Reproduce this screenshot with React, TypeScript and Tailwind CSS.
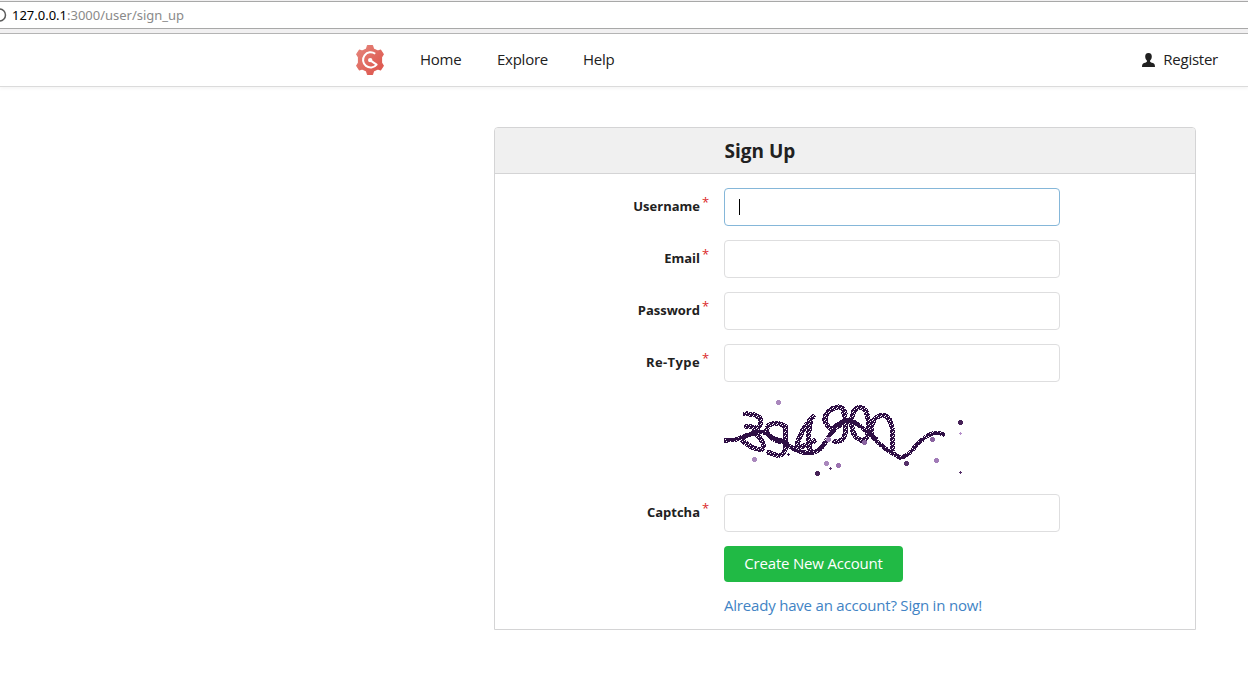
import React from "react";

const DARK = "#2f0f45";

const strokes = [
  "M745 414 Q755 413.500 760 418 Q762.500 426 757 428.500 Q750 426 746.500 426.500",
  "M754 432 Q759 436 762.500 441.500 Q765 448 760.500 450 Q751 448 743 441",
  "M786 428 Q784 424.500 778 423.500 Q769 423 767 428 Q766 434 772 438 Q779 443 785 441.500 M785.500 426 L786 446 Q784 457 776 455 L769 452.500",
  "M813 416.500 L804 428 Q797.500 441 796.500 447 Q806 447 814 441 M810.500 420.500 Q808.500 432 808 444 L811 452",
  "M845 413 Q842 404.500 834 408 Q824 412 825 421 Q829 430 833 429 Q844 424 845 419 M843.500 411 Q848 428 843.500 439 Q839 442 834.500 441.500",
  "M860 407.500 Q852 407 851.500 423 Q852 438 862 440.500 Q868.500 441 868.500 424 Q867.500 407 860 407.500",
  "M872 434 Q870 417 882 415.500 Q890 415 892 428 L893 449",
];

const heavy =
  "M741 438.500 Q750 433.500 758 432.500 M766 432 Q769 437 775 439 L786 442 L786.500 447 M833 428.500 Q840 421.500 848 420.500 L855 422.500 M868 432 L877 440";

const strike =
  "M724 440.5 L735 440 Q748 434 757 433 Q766 430 771 437 L787 444 Q797 453 809 453 Q820 453 826 441 Q834 427 845 421 L855 422.5 Q862 427 870 434.5 Q883 449 900 457.5 Q908 457 914 448 Q929 431 939 433 L945 435";

const dots: [number, number, number, string][] = [
  [778.5, 402.5, 2.5, "#aa88bd"],
  [754.5, 459.5, 2.5, "#aa88bd"],
  [826.5, 463.5, 2.5, "#aa88bd"],
  [838.5, 465.5, 2.5, "#9b72b0"],
  [817.5, 473.5, 2.5, "#462257"],
  [828.5, 439.5, 2.5, "#9c78b0"],
  [864.5, 442.5, 2.5, "#8a64a0"],
  [932.5, 439.5, 2.5, "#8a64a0"],
  [906.5, 463.5, 2.5, "#56316a"],
  [936.5, 460.5, 2.5, "#a27cb8"],
  [960.5, 422.5, 2.5, "#462257"],
  [788.5, 454.5, 1.2, DARK],
  [830.5, 468.5, 1.2, "#56316a"],
  [960.5, 433.5, 1.2, "#b58fca"],
  [960.5, 472.5, 1.2, "#56316a"],
];

function Captcha() {
  return (
    <svg width="240" height="80" viewBox="724 396 240 80" fill="none" shapeRendering="crispEdges">
      <defs>
        <pattern id="weave" width="4" height="4" patternUnits="userSpaceOnUse">
          <path fill={DARK} d="M0 0h4v4H0z" />
          <path fill="#fff" d="M0 0h1v1H0zM2 1h1v1H2zM1 3h1v1H1z" />
        </pattern>
      </defs>
      {strokes.map((d) => (
        <path key={d} d={d} stroke="url(#weave)" strokeWidth="5" strokeLinecap="round" strokeLinejoin="round" />
      ))}
      <path d={strike} stroke="url(#weave)" strokeWidth="4.4" />
      <path d={strike} stroke={DARK} strokeWidth="1.5" />
      <path d={heavy} stroke={DARK} strokeWidth="4.4" />
      {dots.map(([x, y, r, c]) => (
        <circle key={`${x}-${y}`} cx={x} cy={y} r={r} fill={c} />
      ))}
    </svg>
  );
}

function Logo() {
  return (
    <svg width="28" height="30" viewBox="0 0 28 30">
      <defs>
        <linearGradient id="gear" x1="0" y1="0" x2="1" y2="1">
          <stop offset="0" stopColor="#e5857b" />
          <stop offset="1" stopColor="#dc5148" />
        </linearGradient>
      </defs>
      <path
        fill="url(#gear)"
        stroke="url(#gear)"
        strokeWidth="1.2"
        strokeLinejoin="round"
        d="M11.5.7h5l1 3.300 4.300 2 2.900-.8 2.600 4.100-1.800 2.800v5.800l1.800 2.800-2.600 4.100-2.900-.8-4.300 2-1 3.300h-5l-1-3.300-4.300-2-2.900.8L.7 20.700l1.800-2.800v-5.800L.7 9.300l2.600-4.100 2.900.8 4.300-2z"
      />
      <path
        fill="none"
        stroke="#fff"
        strokeWidth="2"
        strokeLinejoin="round"
        d="M19.200 8.800A7.600 7.600 0 1 0 20.600 19.600L14.300 15.400"
      />
      <circle cx="14.200" cy="15.100" r="2.200" fill="#fff" />
    </svg>
  );
}

function Label({ text }: { text: string }) {
  return (
    <div className="flex h-[38px] w-[213px] items-start justify-end text-[13px] leading-[18px] font-bold text-[#212121]">
      <span className={text === "Re-Type" ? "pt-[9px] tracking-[0.4px]" : "pt-[9px]"}>{text}</span>
      <span className="w-[9px] pt-[5px] pl-0.5 text-[13px] font-normal text-[#db2828]">*</span>
    </div>
  );
}

function Field({ label, focused = false }: { label: string; focused?: boolean }) {
  return (
    <div className="flex gap-[15px]">
      <div className="w-[214px] pl-px">
        <Label text={label} />
      </div>
      <div
        className={
          focused
            ? "flex h-[38px] w-[336px] items-center rounded border border-[#85b7d9] pl-3.5"
            : "h-[38px] w-[336px] rounded border border-[#dededf]"
        }
      >
        {focused && <span className="h-4 w-px bg-black" />}
      </div>
    </div>
  );
}

export default function App() {
  return (
    <div className="h-[675px] overflow-hidden bg-white font-['Open_Sans','Noto_Sans',sans-serif] text-[#212121]">
      <div className="flex h-[34px] flex-col border-b border-[#b4b4b4] bg-[#f1f0f1] pt-px">
        <div className="flex h-7 items-center border-y border-[#a8a8a8] bg-white">
          <svg width="8" height="14" viewBox="0 0 8 14" className="shrink-0">
            <circle cx="-.5" cy="7" r="6" fill="none" stroke="#5a5a5a" strokeWidth="1.500" />
          </svg>
          <span className="ml-1 pt-0.5 font-['Noto_Sans',sans-serif] text-[13px] tracking-[-0.01px] text-[#8a8a8a]">
            <span className="text-black">127.0.0.1</span>:3000/user/sign_up
          </span>
        </div>
      </div>
      <nav className="flex h-[53px] items-center border-b border-[#dbdbdb] pr-[30px] pl-[356px] text-[15px] tracking-[-0.25px] shadow-[0_2px_3px_rgba(0,0,0,0.04)]">
        <Logo />
        <span className="ml-9 w-[77px] pb-0.5">Home</span>
        <span className="w-[86px] pb-0.5">Explore</span>
        <span className="pb-0.5">Help</span>
        <span className="ml-auto flex items-center gap-2">
          <svg width="13" height="14" viewBox="0 0 13 14" fill="#212121">
            <path d="M6.500 0C8.900 0 9.900 1.600 9.800 3.700 9.700 5.800 8.700 7 8.100 7.600v1.100c.4.500 1.400.8 2.800 1.300 1.500.6 2.100 1.500 2.100 4H0c0-2.500.6-3.400 2.100-4 1.400-.5 2.400-.8 2.800-1.300V7.600C4.300 7 3.300 5.800 3.200 3.700 3.100 1.600 4.100 0 6.500 0z" />
          </svg>
          <span className="pb-0.5">Register</span>
        </span>
      </nav>
      <main className="mt-10 ml-[494px] h-[503px] w-[702px] rounded-t border border-[#d4d4d5]">
        <h1 className="flex h-[46px] items-center rounded-t-[3px] border-b border-[#d4d4d5] bg-[#f0f0f0] pt-px pl-[229.500px] text-[19px] font-bold">
          Sign Up
        </h1>
        <form className="flex flex-col gap-3.5 pt-3.5">
          <Field label="Username" focused />
          <Field label="Email" />
          <Field label="Password" />
          <Field label="Re-Type" />
          <div className="h-[84px] pl-[229px]">
            <Captcha />
          </div>
          <Field label="Captcha" />
          <div className="pl-[229px]">
            <button
              type="button"
              className="block h-9 w-[179px] rounded bg-[#21ba45] pb-px text-[15px] tracking-[-0.2px] text-white"
            >
              Create New Account
            </button>
            <a className="mt-[13px] block text-[15px] leading-5 tracking-[-0.2px] text-[#4183c4]">
              Already have an account? Sign in now!
            </a>
          </div>
        </form>
      </main>
    </div>
  );
}
